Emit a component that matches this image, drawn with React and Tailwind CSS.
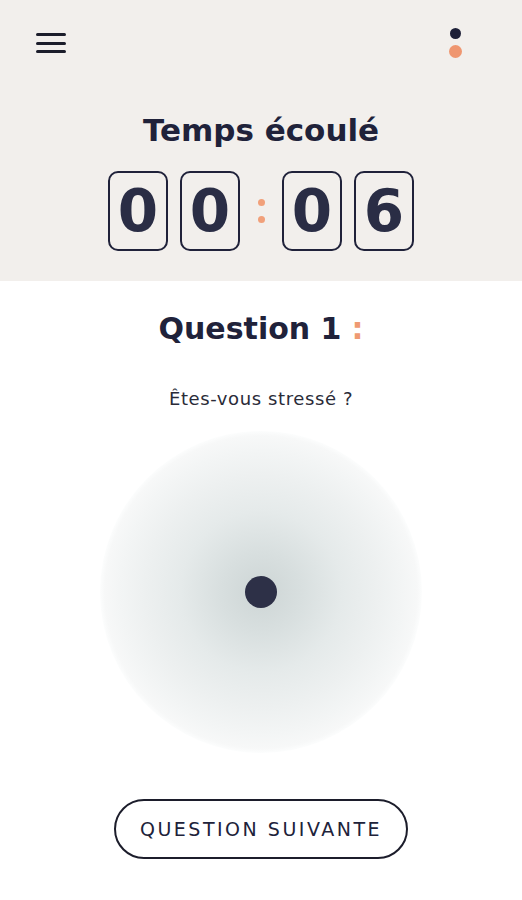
import { useState } from 'react';

const font = { fontFamily: '"DejaVu Sans", "Noto Sans", sans-serif' };

function Digit({ value }) {
  return (
    <div className="w-[60px] h-[80px] rounded-[10px] border-2 border-[#20223a] flex items-center justify-center">
      <span className="text-[58px] font-bold leading-none text-[#2a2d45]">{value}</span>
    </div>
  );
}

export default function App() {
  const [question] = useState(1);

  return (
    <div className="w-[522px] h-[900px] bg-white flex flex-col" style={font}>
      <div className="bg-[#f2efec] h-[281px] flex flex-col">
        <div className="flex items-center justify-between px-9 pt-[28px]">
          <button className="flex flex-col gap-[5.5px] w-[30px]">
            <span className="h-[3px] w-full bg-[#1c1d2b] rounded-full" />
            <span className="h-[3px] w-full bg-[#1c1d2b] rounded-full" />
            <span className="h-[3px] w-full bg-[#1c1d2b] rounded-full" />
          </button>
          <div className="flex flex-col items-center gap-[6px] mr-[24px]">
            <span className="w-[11px] h-[11px] rounded-full bg-[#1e2038]" />
            <span className="w-[13px] h-[13px] rounded-full bg-[#ef9670]" />
          </div>
        </div>

        <h1 className="mt-[52px] text-center text-[31px] font-bold text-[#20223a] leading-[40px]">
          Temps écoulé
        </h1>

        <div className="mt-[21px] flex items-center justify-center">
          <div className="flex gap-3">
            <Digit value="0" />
            <Digit value="0" />
          </div>
          <div className="w-[42px] flex flex-col items-center gap-[10px]">
            <span className="w-[7px] h-[7px] rounded-full bg-[#f1a07a]" />
            <span className="w-[7px] h-[7px] rounded-full bg-[#f1a07a]" />
          </div>
          <div className="flex gap-3">
            <Digit value="0" />
            <Digit value="6" />
          </div>
        </div>
      </div>

      <h2 className="mt-[28px] text-center text-[30px] font-bold text-[#20223a] leading-[40px]">
        Question {question}<span className="text-[#ef9a72] ml-[10px]">:</span>
      </h2>

      <p className="mt-[38px] text-center text-[18px] tracking-[0.6px] text-[#2a2b38] leading-6">
        Êtes-vous stressé ?
      </p>

      <div className="mt-[20px] flex justify-center">
        <div className="w-[322px] h-[322px] rounded-full flex items-center justify-center bg-[radial-gradient(circle_closest-side,#cdd5d5_0%,#d8dfdf_25%,#e5eaea_50%,#edf0f0_72%,#f3f5f5_88%,#f7f8f8_97%,#fcfdfd_100%)]">
          <span className="w-[32px] h-[32px] rounded-full bg-[#2d3047]" />
        </div>
      </div>

      <div className="mt-[46px] flex justify-center">
        <button className="w-[294px] h-[60px] rounded-full border-2 border-[#1c1d2b] text-[19px] font-medium tracking-[2.5px] text-[#20223a]">
          QUESTION SUIVANTE
        </button>
      </div>
    </div>
  );
}
